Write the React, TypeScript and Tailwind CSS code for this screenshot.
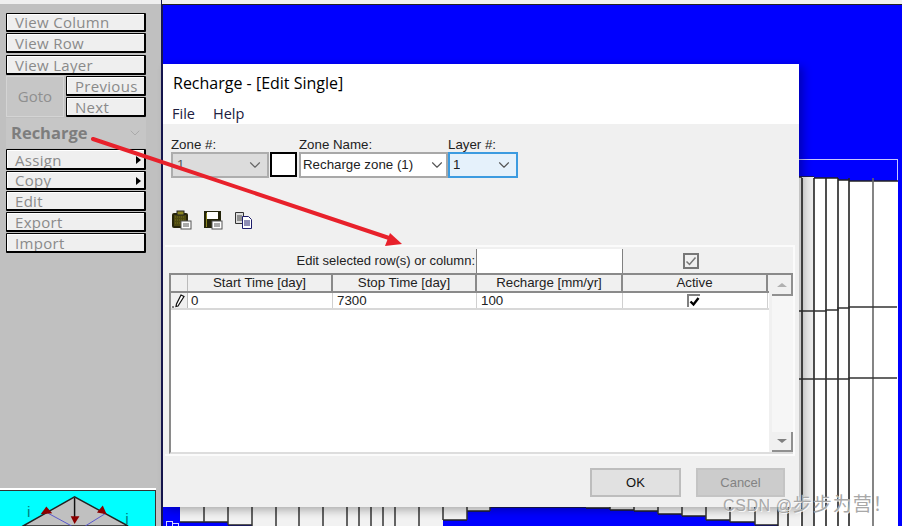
import { ChevronDown } from "lucide-react";

const sideButton =
  "flex items-end overflow-hidden rounded-[1px] border border-black border-r-2 border-b-2 bg-[#efefef] pl-2 font-['Open_Sans',sans-serif] text-[15px] leading-[16px] tracking-[0.3px] text-[#8a8a8a] shadow-[inset_1px_1px_0_#fff]";

function Combo({ className, value, chevron }: { className: string; value: string; chevron: string }) {
  return (
    <div className={`flex h-[26px] items-center justify-between ${className}`}>
      <span className="truncate">{value}</span>
      <ChevronDown className={`shrink-0 ${chevron}`} size={18} strokeWidth={1.5} />
    </div>
  );
}

function ClipIcon() {
  return (
    <svg width="20" height="20" viewBox="0 0 20 20">
      <rect x="0" y="3" width="16" height="15" rx="2" fill="#26240a" />
      <rect x="2" y="5" width="12" height="11" fill="#4c4810" />
      <path d="M3 7h10M3 10h10M3 13h10" stroke="#77701a" strokeDasharray="1 1" />
      <rect x="5" y="1" width="7" height="4" fill="#8a8420" stroke="#222" />
      <rect x="9" y="11" width="10" height="8" fill="#fff" stroke="#555" />
      <path d="M11 14h6M11 16h6" stroke="#555" />
    </svg>
  );
}

function SaveIcon() {
  return (
    <svg width="20" height="20" viewBox="0 0 20 20">
      <rect x="1" y="1" width="17" height="17" fill="#24240a" />
      <rect x="4" y="2" width="11" height="7" fill="#fff" />
      <rect x="3" y="3" width="1" height="14" fill="#8a8420" />
      <rect x="9" y="11" width="10" height="8" fill="#fff" stroke="#555" />
      <path d="M11 14h6M11 16h6" stroke="#555" />
    </svg>
  );
}

function CopyIcon() {
  return (
    <svg width="20" height="20" viewBox="0 0 20 20">
      <path d="M1.5 2.5h8v11h-8z" fill="#ddd" stroke="#333" />
      <path d="M3 6h5M3 8h5M3 10h5" stroke="#444" />
      <path d="M8.5 6.5h6l3 3v9h-9z" fill="#fff" stroke="#1d1d6b" />
      <path d="M10 11h6M10 13h6M10 15h6" stroke="#1d1d6b" />
    </svg>
  );
}

// model grid behind the dialog
function ModelGrid() {
  const topSteps = [
    [799, 814, 177],
    [814, 838, 178],
    [838, 849, 180],
    [849, 898, 181],
  ];
  const bottomSteps = [
    [180, 228, 522],
    [228, 252, 525],
    [252, 443, 530],
    [443, 467, 520],
    [467, 490, 511],
    [490, 586, 507],
    [586, 610, 508],
    [610, 634, 510],
    [634, 658, 511],
    [658, 682, 514],
    [682, 706, 516],
    [706, 730, 520],
    [730, 755, 522],
    [755, 778, 525],
    [778, 800, 530],
  ];
  return (
    <svg className="absolute top-0 left-0" width="902" height="526" viewBox="0 0 902 526">
      <rect x="798.5" y="159.5" width="99" height="30" fill="none" stroke="#c8c8ff" />
      <rect x="799" y="181" width="99" height="345" fill="#fff" />
      {topSteps.map(([a, b, y]) => (
        <g key={a}>
          <rect x={a} y={y} width={b - a} height="349" fill="#fff" />
          <path d={`M${a} ${y}H${b}`} stroke="#222" strokeWidth="1.5" />
        </g>
      ))}
      <rect x="802" y="177" width="12" height="349" fill="#ececec" />
      {[802, 814, 826, 838, 849, 873].map((x) => (
        <path key={x} d={`M${x} 178V526`} stroke={x === 873 ? "#666" : "#222"} strokeWidth="1.6" />
      ))}
      <path d="M799 311H826V310H838V308H849V307H897" stroke="#333" fill="none" strokeWidth="1.5" />
      <path d="M799 379H849V378H897" stroke="#333" fill="none" strokeWidth="1.5" />
      {bottomSteps.map(([a, b, y]) => (
        <g key={a}>
          <rect x={a} y="500" width={b - a} height={y - 500} fill="#f2f2f2" />
          <path d={`M${a} ${y}H${b}`} stroke="#222" strokeWidth="1.5" />
        </g>
      ))}
      {[204, 228, 252].map((x) => (
        <path key={x} d={`M${x} 507V${x === 252 ? 526 : x === 228 ? 525 : 522}`} stroke="#333" strokeWidth="1.5" />
      ))}
      {[276, 299, 323, 347, 359, 371, 383, 395, 419].map((x) => (
        <path key={x} d={`M${x} 507V526`} stroke="#333" strokeWidth="1.5" />
      ))}
      <path d="M443 507V520M467 507V520M490 507V511M610 507V510M634 507V511M658 507V514M682 507V516M706 507V520M730 507V522M755 507V525" stroke="#333" strokeWidth="1.5" />
      <path d="M778 507V526M788 507V526" stroke="#222" strokeWidth="1.5" />
      <rect x="166.5" y="521.5" width="6" height="6" fill="none" stroke="#d8d8ff" />
      <rect x="172.5" y="523.5" width="6" height="6" fill="none" stroke="#d8d8ff" />
    </svg>
  );
}

export default function App() {
  return (
    <div className="relative flex h-[526px] w-[902px] overflow-hidden bg-[#c0c0c0]">
      {/* left tool panel */}
      <aside className="flex w-[161px] shrink-0 flex-col border-t-[4px] border-[#efefef]">
        <div className="flex flex-col gap-px pt-[9px] pl-[6px]">
          <div className={`${sideButton} h-[19px] w-[140px]`}>View Column</div>
          <div className={`${sideButton} h-[20px] w-[140px]`}>View Row</div>
          <div className={`${sideButton} mt-px h-[20px] w-[140px]`}>View Layer</div>
          <div className="flex w-[140px] gap-[2px]">
            <div className="flex h-[41px] w-[58px] items-center justify-center border border-[#d4d4d4] bg-[#c6c6c6] font-['Open_Sans',sans-serif] text-[15px] text-[#8f8f8f]">
              Goto
            </div>
            <div className="flex flex-col gap-px">
              <div className={`${sideButton} h-[20px] w-[80px]`}>Previous</div>
              <div className={`${sideButton} h-[20px] w-[80px]`}>Next</div>
            </div>
          </div>
          <div className="flex h-[30px] w-[140px] items-center justify-between bg-[#c6c6c6] pr-[3px] pl-[5px] font-['Open_Sans',sans-serif] text-[16.5px] font-bold text-[#7d7d7d]">
            Recharge
            <ChevronDown size={16} strokeWidth={1.5} className="text-[#aaaaaa]" />
          </div>
          <div className={`${sideButton} relative h-[21px] w-[140px]`}>
            Assign
            <span className="absolute top-[6px] right-[3px] border-y-[4px] border-l-[5px] border-y-transparent border-l-black" />
          </div>
          <div className={`${sideButton} relative h-[19px] w-[140px]`}>
            Copy
            <span className="absolute top-[5px] right-[3px] border-y-[4px] border-l-[5px] border-y-transparent border-l-black" />
          </div>
          <div className={`${sideButton} h-[20px] w-[140px]`}>Edit</div>
          <div className={`${sideButton} h-[20px] w-[140px]`}>Export</div>
          <div className={`${sideButton} h-[20px] w-[140px]`}>Import</div>
        </div>
        <div className="mt-auto h-[38px] w-[156px] border-t-2 border-white bg-[#00ffff]">
          <svg className="border-t border-r border-[#333]" width="156" height="36" viewBox="0 490 156 36">
            <path d="M22 526L75 496L130 526Z" fill="#c0c0c0" stroke="#222" strokeWidth="1.5" />
            <path d="M48 513L72 526M107 513L86 526" stroke="#5555cc" />
            <path d="M75 497V517" stroke="#111" strokeWidth="1.5" />
            <path d="M71 516H80L75 524Z" fill="#8b0000" />
            <path d="M40 514L46 506L52 513Z" fill="#8b0000" />
            <path d="M98 512L104 505L108 514Z" fill="#8b0000" />
            <text x="26" y="517" fill="#008080" fontSize="16" fontFamily="Liberation Sans, sans-serif">i</text>
            <text x="127" y="524" fill="#008080" fontSize="16" fontFamily="Liberation Sans, sans-serif">i</text>
          </svg>
        </div>
      </aside>

      {/* model canvas */}
      <main className="relative flex-1 border-t-[2px] border-l-[2px] border-[#161650] bg-[#0000ff]" />
      <div className="absolute top-0 left-[162px] h-[5px] w-[740px] border-b border-[#222] bg-[#efefef]" />
      <ModelGrid />

      {/* Edit Single dialog */}
      <section className="absolute top-[64px] left-[163px] flex h-[443px] w-[636px] flex-col bg-[#f0f0f0] font-['Liberation_Sans',sans-serif] shadow-[4px_3px_9px_rgba(0,0,0,0.3)]">
        <div className="h-[60px] shrink-0 bg-white font-['Open_Sans',sans-serif] text-black">
          <div className="pt-[9px] pl-[10px] text-[16px] leading-5">Recharge - [Edit Single]</div>
          <div className="flex gap-[18px] pt-[11px] pl-[9px] text-[14.5px] leading-5 text-[#202040]">
            <span>File</span>
            <span>Help</span>
          </div>
        </div>

        <div className="flex items-end pt-[13px] pl-[8px] text-[13.3px] text-[#222]">
          <div className="flex flex-col">
            <span className="h-[15px] leading-[15px]">Zone #:</span>
            <Combo
              className="w-[98px] border-2 border-[#adadad] bg-[#dcdcdc] pr-[3px] pl-[4px] text-[#555]"
              value="1"
              chevron="text-[#666]"
            />
          </div>
          <div className="mb-[1px] ml-[1px] h-[25px] w-[27px] border-2 border-black bg-white" />
          <div className="ml-[2px] flex flex-col">
            <span className="h-[15px] leading-[15px]">Zone Name:</span>
            <Combo
              className="w-[149px] border-2 border-[#a8a8a8] bg-white pr-0 pl-[2px]"
              value="Recharge zone (1)"
              chevron="text-[#555]"
            />
          </div>
          <div className="flex flex-col">
            <span className="h-[15px] leading-[15px]">Layer #:</span>
            <Combo
              className="w-[70px] border-2 border-[#3c9be0] bg-[#e5f1fb] pr-[3px] pl-[3px]"
              value="1"
              chevron="text-[#555]"
            />
          </div>
        </div>

        <div className="flex gap-[11px] pt-[32px] pl-[9px]">
          <ClipIcon />
          <SaveIcon />
          <CopyIcon />
        </div>

        {/* table panel */}
        <div className="mt-[15px] ml-[2px] flex h-[211px] w-[630px] flex-col border-t-2 border-r-2 border-b-2 border-[#fbfbfb] pt-[2px] pl-[2px] text-[13.3px] text-[#222]">
          <div className="flex h-[24px] shrink-0">
            <div className="flex w-[309px] items-center justify-end pr-[1px] text-[13px]">Edit selected row(s) or column:</div>
            <div className="h-full w-[146px] border-l border-[#808080] bg-white" />
            <div className="flex h-full w-[166px] items-center border-l border-[#808080] pl-[60px]">
              <span className="flex h-[16px] w-[16px] items-center justify-center border-2 border-[#777]">
                <svg width="12" height="12" viewBox="0 0 12 12">
                  <path d="M1.5 6.5L4.5 9.5L10.5 2.5" fill="none" stroke="#777" strokeWidth="1.5" />
                </svg>
              </span>
            </div>
          </div>

          <div className="ml-[2px] flex w-[624px] flex-1 border-t-2 border-l-2 border-[#8a8a8a] border-b-[2px] border-b-[#dddddd]">
            <div className="w-[598px] bg-white">
              <div className="flex h-[18px] border-b-2 border-[#8a8a8a] bg-[#f0f0f0] text-center leading-[16px]">
                <div className="w-[17px] border-r border-[#bbb]" />
                <div className="w-[145px] border-r-2 border-[#8a8a8a]">Start Time [day]</div>
                <div className="w-[144px] border-r-2 border-[#8a8a8a]">Stop Time [day]</div>
                <div className="w-[146px] border-r-2 border-[#8a8a8a]">Recharge [mm/yr]</div>
                <div className="w-[145px] border-r-2 border-[#8a8a8a]">Active</div>
              </div>
              <div className="flex h-[17px] border-b-2 border-[#d8d8d8] leading-[15px]">
                <div className="flex w-[17px] items-center justify-center border-r border-[#bbb] bg-[#f0f0f0]">
                  <svg width="14" height="14" viewBox="0 0 14 14">
                    <path d="M9 1L12 2.5L6 12L4 12.5L4.5 10Z" fill="#fff" stroke="#111" strokeWidth="1.2" />
                    <path d="M0 13h2" stroke="#111" />
                  </svg>
                </div>
                <div className="w-[145px] border-r border-[#d0d0d0] pl-[3px]">0</div>
                <div className="w-[144px] border-r border-[#d0d0d0] pl-[4px]">7300</div>
                <div className="w-[146px] border-r border-[#d0d0d0] pl-[4px]">100</div>
                <div className="flex w-[145px] items-center justify-center border-r border-[#d0d0d0] pr-[4px]">
                  <span className="flex h-[13px] w-[13px] items-center justify-center border-t-2 border-l-2 border-[#808080] bg-white">
                    <svg width="11" height="11" viewBox="0 0 11 11">
                      <path d="M1.5 5.5L4.5 8.5L9.5 2" fill="none" stroke="#000" strokeWidth="2.4" />
                    </svg>
                  </span>
                </div>
              </div>
            </div>
            <div className="ml-[3px] flex h-full w-[21px] flex-col justify-between bg-[#f6f6f6]">
              <div className="flex h-[21px] items-center justify-center border-r-2 border-b-2 border-[#909090] bg-[#f0f0f0]">
                <span className="border-x-[5px] border-b-[4px] border-x-transparent border-b-[#b0b0b0]" />
              </div>
              <div className="flex h-[20px] items-center justify-center border-r-2 border-b-2 border-[#909090] bg-[#f0f0f0]">
                <span className="border-x-[5px] border-t-[4px] border-x-transparent border-t-[#808080]" />
              </div>
            </div>
          </div>
        </div>

        <div className="mt-[12px] flex gap-[15px] pl-[427px] text-[13px]">
          <button type="button" className="h-[29px] w-[91px] border-2 border-[#bdbdbd] bg-[#e1e1e1] text-[#111]">
            OK
          </button>
          <button type="button" className="h-[29px] w-[89px] border-2 border-[#c4c4c4] bg-[#cccccc] text-[#838383]">
            Cancel
          </button>
        </div>
      </section>

      {/* annotation arrow */}
      <svg className="absolute top-0 left-0" width="902" height="526" viewBox="0 0 902 526">
        <path d="M93 139L392 239" stroke="#e8212b" strokeWidth="4" strokeLinecap="round" />
        <path d="M402 244L385 246L390 233Z" fill="#e8212b" />
      </svg>

      <div className="absolute top-[495px] left-[723px] font-['Liberation_Sans','Noto_Sans_CJK_SC',sans-serif] text-[16px] leading-5 tracking-[0.6px] text-[#a8a8a8] [text-shadow:1px_1px_0_rgba(255,255,255,0.8)]">
        CSDN @<span className="text-[19px] tracking-[1px]">步步为营！</span>
      </div>
    </div>
  );
}
